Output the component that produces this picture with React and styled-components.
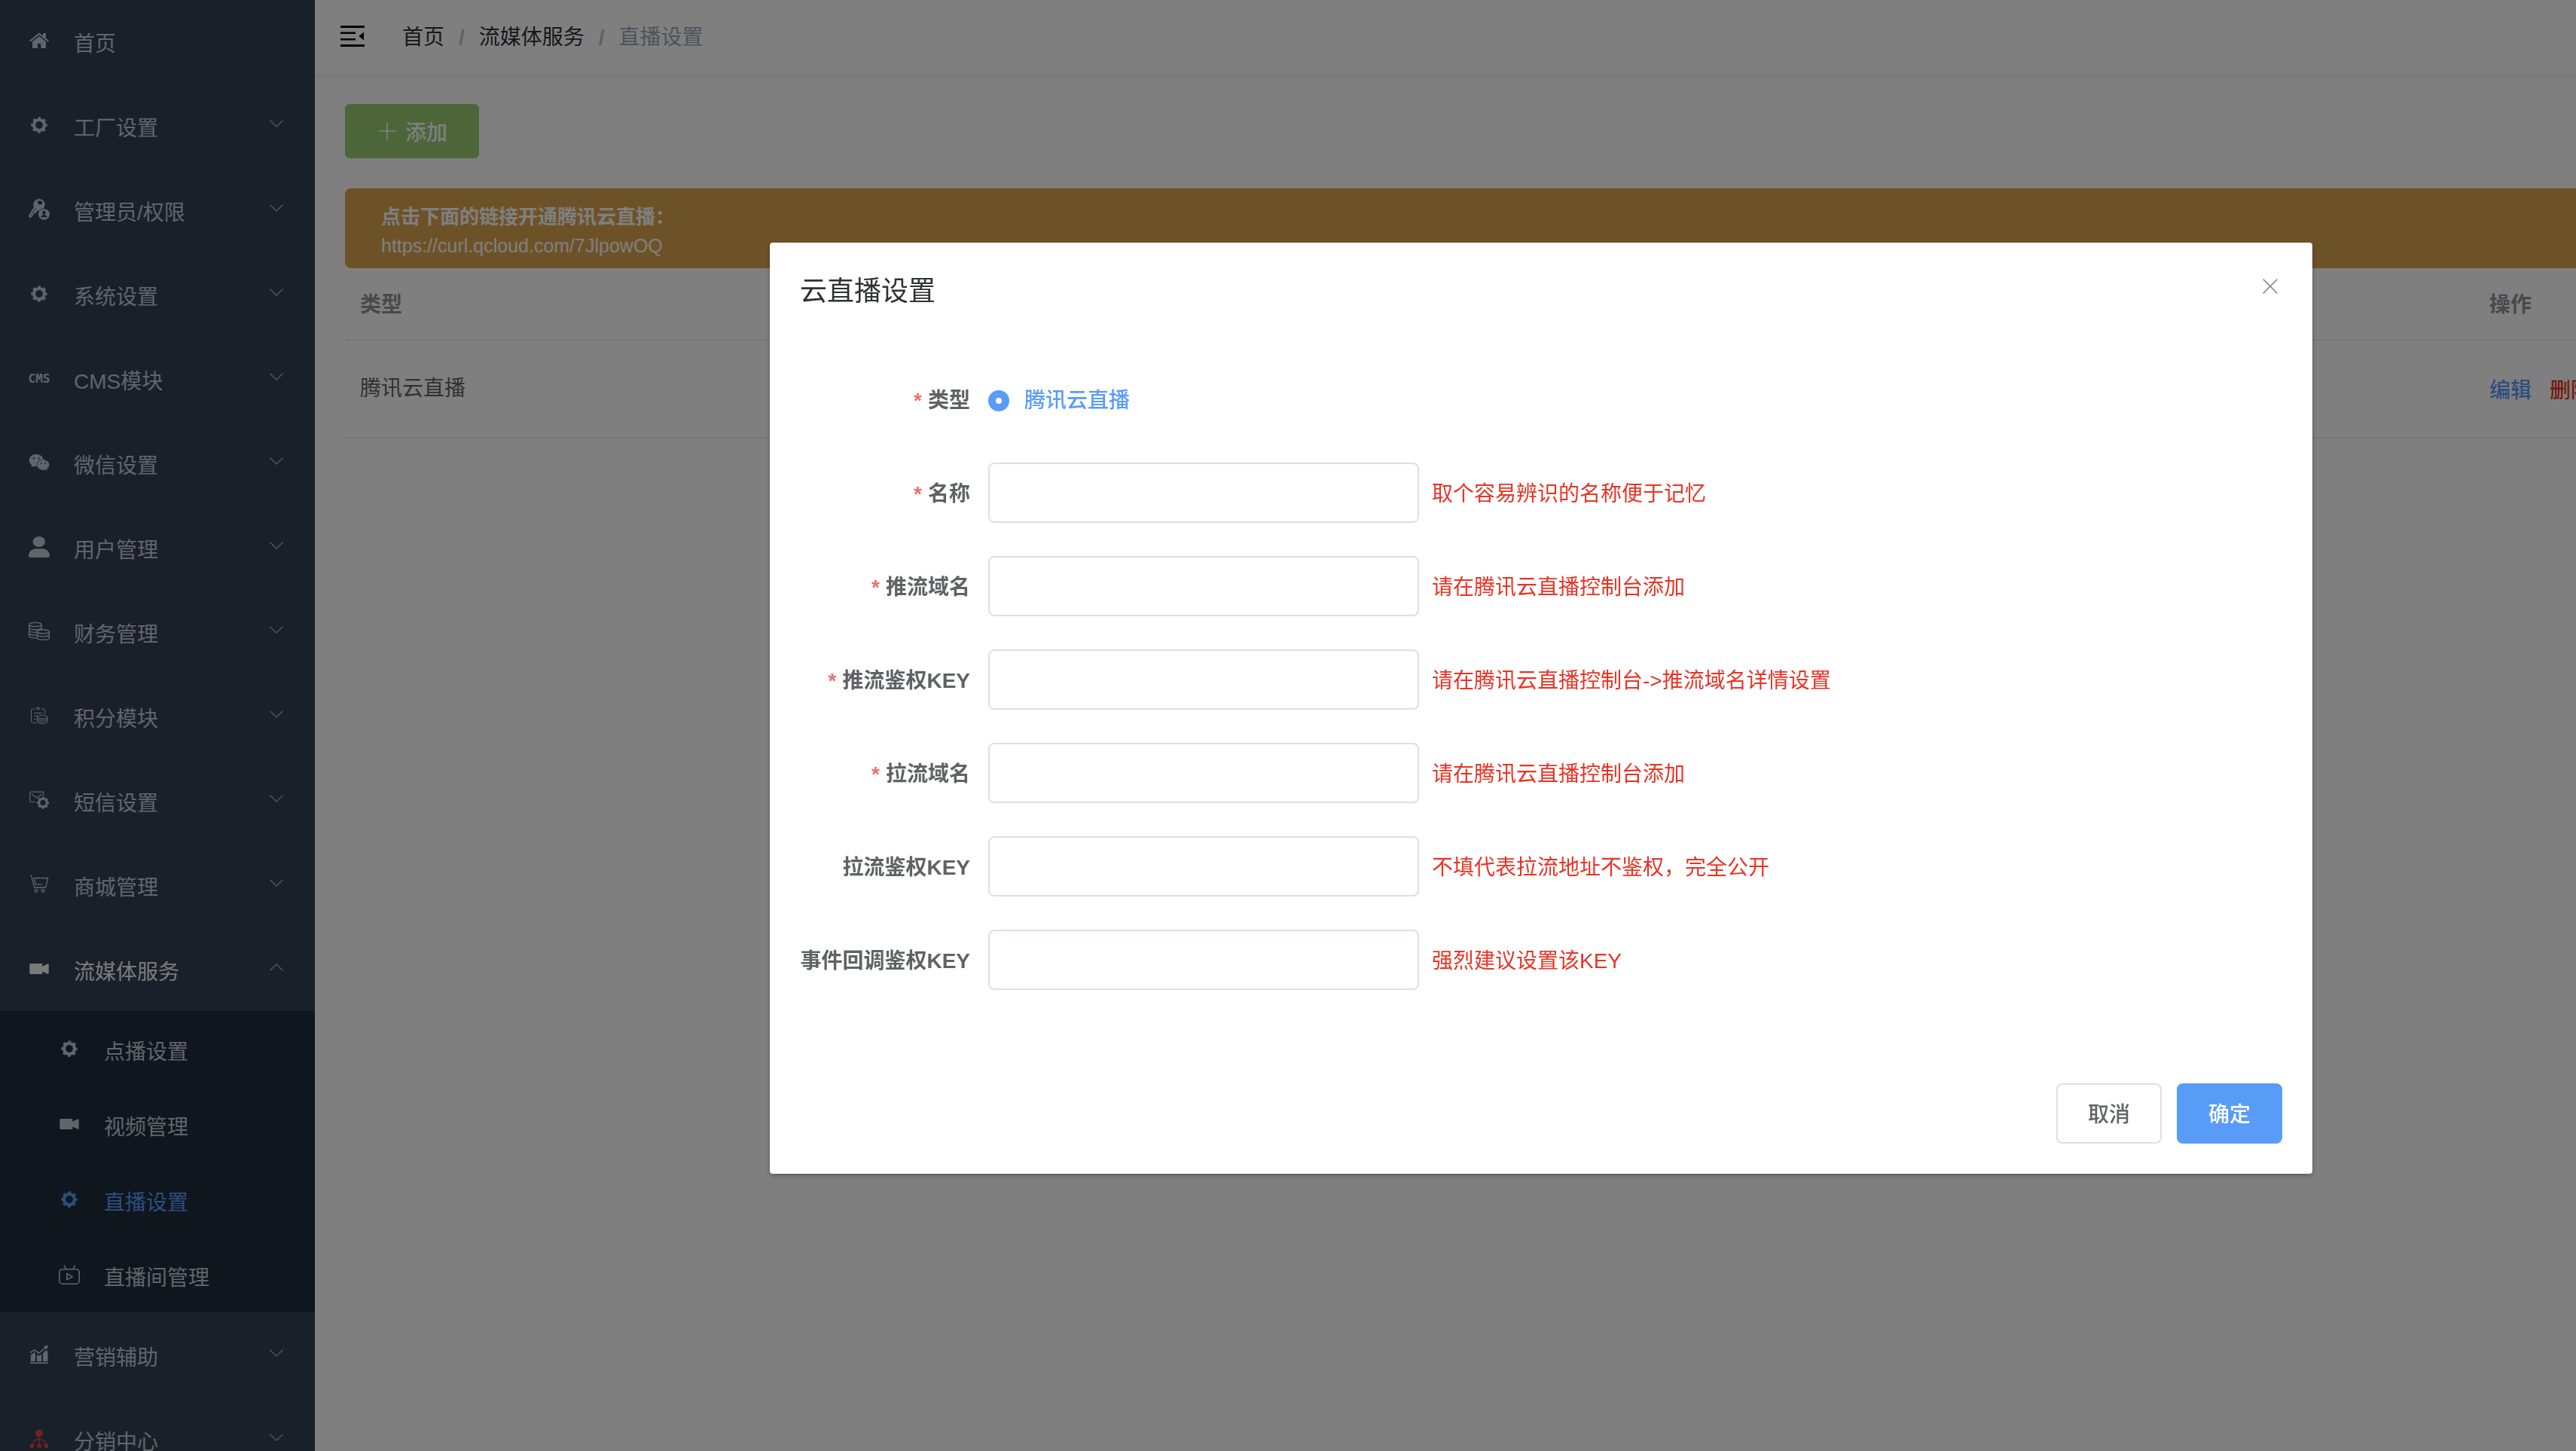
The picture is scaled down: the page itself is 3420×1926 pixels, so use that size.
import React, { useState } from 'react';
import styled, { createGlobalStyle } from 'styled-components';
import { FaWeixin } from 'react-icons/fa';

const GlobalStyle = createGlobalStyle`
  * {
    box-sizing: border-box;
  }
  html,
  body {
    margin: 0;
    overflow: hidden;
    background: #fff;
  }
  body,
  button,
  input {
    font-family: "Liberation Sans", "Noto Sans CJK SC", sans-serif;
    font-size: 28px;
  }
`;

/* ---------- icons ---------- */

const Svg = ({ children, ...rest }) => (
  <svg width="28" height="28" viewBox="0 0 28 28" fill="none" aria-hidden="true" { ...rest }>
    {children}
  </svg>
);

const HomeIcon = () => (
  <Svg fill="currentColor">
    <path d="M1 14 14 3.5l5 4V4h4v6.8l4 3.2-1.3 1.5L14 6.2 2.3 15.5z" />
    <path d="M14 8l9 7.2V23q0 1-1 1h-5.7v-6H12v6H6q-1 0-1-1v-7.8z" />
  </Svg>
);

const Cog = () => (
  <g stroke="currentColor" fill="none">
    <circle cx="14" cy="14" r="7" strokeWidth="4.2" />
    <circle cx="14" cy="14" r="9.7" strokeWidth="2" strokeDasharray="3.8 3.818" strokeDashoffset="1.9" />
  </g>
);

const GearIcon = () => <Svg><Cog /></Svg>;

const AdminIcon = () => (
  <Svg>
    <path
      fill="currentColor"
      fillRule="evenodd"
      d="M14 0a7.6 7.6 0 0 0-7 10.6L.3 22Q-.4 25 2.4 25.2L6 22l1-2.6 2.6-.6 1.8-3q6 1 9.6-5.4A7.6 7.6 0 0 0 14 0zm1.2 2.6q3.6.6 3 3.6-1.600 2.400-4.400 1-2.600-1.400-1.800-3.600 1.200-1.400 3.200-1z"
    />
    <path stroke="#354154" strokeWidth="0.8" d="M9.5 11.5 3 22.5" />
    <circle cx="20.4" cy="20.6" r="8.2" fill="#354154" />
    <circle cx="20.4" cy="20.6" r="7.4" fill="currentColor" />
    <path fill="#354154" d="M20.4 15.6a2.6 2.8 0 0 1 1.2 5l.2 1q3 .6 3 2.6h-8.8q0-2 3-2.6l.2-1a2.600 2.800 0 0 1 1.200-5z" />
  </Svg>
);

const UserIcon = () => (
  <Svg fill="currentColor">
    <ellipse cx="13.7" cy="7" rx="8.2" ry="7" />
    <path d="M0 25.5C0 20 5 16.3 10 16.3h8c5 0 10 3.7 10 9.2Q28 28 25 28H3q-3 0-3-2.5z" />
  </Svg>
);

const CoinsIcon = () => (
  <Svg stroke="currentColor" strokeWidth="1.4">
    <ellipse cx="8.8" cy="5" rx="8.2" ry="2.6" />
    <path d="M.6 5v15.5c1 1.8 5 2.6 9.4 2.2M17 5v6.5M.6 9.5c1.4 3 15 3 16.4 0M.6 13c1 1.800 5 2.600 10 2.200M.6 16.800c1 1.800 5 2.600 9.400 2.200" />
    <ellipse cx="19.3" cy="14.4" rx="8.1" ry="2.6" />
    <path d="M11.2 14.4V23c1.4 3 14.8 3 16.2 0v-8.6M11.2 18.6c1.4 3 14.8 3 16.2 0" />
  </Svg>
);

const PointsIcon = () => (
  <Svg stroke="currentColor" strokeWidth="1">
    <path d="M8 5H5.500Q3.500 5 3.500 7v14.500q0 2 2 2H10M17 5h2.500q2 0 2 2v4.500M9.500 3.500h6M10.500 5.500h4M12.500 3.500v2M7 10.500h11M7 14.500h5M7 18.500h3" />
    <ellipse cx="18.3" cy="15.5" rx="6.6" ry="2.2" />
    <path d="M11.7 15.5v7c1 2.8 12.2 2.8 13.2 0v-7M11.7 17.8c1 2.8 12.2 2.8 13.2 0M11.7 20.2c1 2.8 12.2 2.8 13.2 0" />
  </Svg>
);

const SmsIcon = () => (
  <Svg stroke="currentColor" strokeWidth="1.2">
    <path d="M9 16.5H3.5q-1.8 0-1.8-1.8V5q0-1.8 1.8-1.8h15q1.3 0 1.3 1.8v3M4 6l7.2 5L18 6" />
    <g transform="translate(8.4 6.9) scale(.76)"><Cog /></g>
  </Svg>
);

const CartIcon = () => (
  <Svg stroke="currentColor" strokeWidth="1.3">
    <path d="M2 2.3h1.5L7.8 18h14.8l3-12.5H7.2l2 8.3h8.5" strokeLinejoin="round" />
    <circle cx="10" cy="22.5" r="1.8" />
    <circle cx="19" cy="22.5" r="1.8" />
  </Svg>
);

const VideoIcon = () => (
  <Svg fill="currentColor">
    <path d="M2.5 7H17q1.2 0 1.2 1.2v2.6l7.3-3.5q1.2-.3 1.2.7v12q0 1-1.2.7l-7.3-3v2.1Q18.2 21 17 21H2.5q-1.2 0-1.2-1.2V8.2Q1.3 7 2.5 7z" />
  </Svg>
);

const TvIcon = () => (
  <Svg stroke="currentColor" strokeWidth="1.6" strokeLinejoin="round" strokeLinecap="round">
    <rect x=".8" y="6.7" width="26.4" height="19.5" rx="4" />
    <path d="M7.5 2l2.3 4.5M21.3 2 19 6.5M10.8 12.4l7.6 4.2-7.6 4z" />
  </Svg>
);

const ChartIcon = () => (
  <Svg fill="currentColor">
    <path d="M2.8 14.5 7.7 11l1.2 1v11H2.8zM11 13.8l2.8 2 3.2-2.2V23h-6zM19 12.2l4-4 2.5 2V23H19zM2 24.3h24v1.6H2z" />
    <path d="M2 11.5l5.7-3.6 6 4.3 9-7.6" fill="none" stroke="currentColor" strokeWidth="1.6" />
    <path d="M26 1.5l-1.8 6-4.5-4.3z" />
  </Svg>
);

const OrgIcon = () => (
  <Svg fill="#e0424a">
    <circle cx="14" cy="6.5" r="5" />
    <circle cx="4.5" cy="23.3" r="2.8" />
    <circle cx="14" cy="23.3" r="2.8" />
    <circle cx="23.5" cy="23.3" r="2.8" />
    <path d="M14 11v12M4.5 22c.5-5 5-7.5 9.5-7.5s9 2.5 9.5 7.5" fill="none" stroke="#e0424a" strokeWidth="1.5" />
  </Svg>
);

const Chevron = ({ up }) => (
  <svg width="18" height="10" viewBox="0 0 18 10" fill="none" stroke="currentColor" strokeWidth="1.4" aria-hidden="true">
    <path d={ up ? 'M.5 9.3 9 1l8.5 8.3' : 'M.5.7 9 9 17.5.7' } />
  </svg>
);

const FoldIcon = () => (
  <svg width="32" height="28" viewBox="0 0 32 28" fill="#000" aria-hidden="true">
    <path d="M0 0h32v3H0zM0 8.500h20v2.500H0zM0 17h20v2.500H0zM0 25h32v3H0zM31 8.500v11L24.500 14z" />
  </svg>
);

const PlusIcon = () => (
  <svg width="24" height="24" viewBox="0 0 24 24" stroke="currentColor" strokeWidth="1.6" aria-hidden="true">
    <path d="M12 .5v23M.5 12h23" />
  </svg>
);

const CloseIcon = () => (
  <svg width="20" height="20" viewBox="0 0 20 20" stroke="currentColor" strokeWidth="1.8" aria-hidden="true">
    <path d="M.7.7l18.600 18.600M19.300.7.7 19.300" />
  </svg>
);

/* ---------- data ---------- */

const menu = [
  { label: '首页', icon: <HomeIcon /> },
  { label: '工厂设置', icon: <GearIcon />, group: true },
  { label: '管理员/权限', icon: <AdminIcon />, group: true },
  { label: '系统设置', icon: <GearIcon />, group: true },
  { label: 'CMS模块', cms: true, group: true },
  { label: '微信设置', icon: <FaWeixin size={ 28 } />, group: true },
  { label: '用户管理', icon: <UserIcon />, group: true },
  { label: '财务管理', icon: <CoinsIcon />, group: true },
  { label: '积分模块', icon: <PointsIcon />, group: true },
  { label: '短信设置', icon: <SmsIcon />, group: true },
  { label: '商城管理', icon: <CartIcon />, group: true },
  {
    label: '流媒体服务',
    icon: <VideoIcon />,
    group: true,
    children: [
      { label: '点播设置', icon: <GearIcon /> },
      { label: '视频管理', icon: <VideoIcon /> },
      { label: '直播设置', icon: <GearIcon />, active: true },
      { label: '直播间管理', icon: <TvIcon /> },
    ],
  },
  { label: '营销辅助', icon: <ChartIcon />, group: true },
  { label: '分销中心', icon: <OrgIcon />, group: true },
];

const fields = [
  { id: 'name', label: '名称', required: true, hint: '取个容易辨识的名称便于记忆' },
  { id: 'pushDomain', label: '推流域名', required: true, hint: '请在腾讯云直播控制台添加' },
  { id: 'pushKey', label: '推流鉴权KEY', required: true, hint: '请在腾讯云直播控制台->推流域名详情设置' },
  { id: 'pullDomain', label: '拉流域名', required: true, hint: '请在腾讯云直播控制台添加' },
  { id: 'pullKey', label: '拉流鉴权KEY', hint: '不填代表拉流地址不鉴权，完全公开' },
  { id: 'eventKey', label: '事件回调鉴权KEY', hint: '强烈建议设置该KEY' },
];

/* ---------- components ---------- */

const Sidebar = () => {
  const [opened, setOpened] = useState('流媒体服务');

  return (
    <Aside>
      <MenuList>
        {menu.map((item) => {
          const open = item.children && opened === item.label;
          return (
            <li key={ item.label }>
              <MenuItem
                as={ item.group ? 'button' : 'a' }
                href={ item.group ? undefined : '#home' }
                $open={ open }
                onClick={ () => item.group && setOpened(open ? '' : item.label) }
              >
                <IconBox>{item.cms ? <CmsMark>CMS</CmsMark> : item.icon}</IconBox>
                <MenuText>{item.label}</MenuText>
                {item.group && <Arrow><Chevron up={ open } /></Arrow>}
              </MenuItem>
              {open && (
                <SubMenu>
                  {item.children.map((child) => (
                    <li key={ child.label }>
                      <SubItem href="#live" $active={ child.active }>
                        <IconBox>{child.icon}</IconBox>
                        <MenuText>{child.label}</MenuText>
                      </SubItem>
                    </li>
                  ))}
                </SubMenu>
              )}
            </li>
          );
        })}
      </MenuList>
    </Aside>
  );
};

const LiveDialog = ({ onClose }) => (
  <Mask>
    <Dialog role="dialog" aria-labelledby="dialog-title">
      <DialogHeader>
        <DialogTitle id="dialog-title">云直播设置</DialogTitle>
        <CloseButton type="button" aria-label="Close" onClick={ onClose }>
          <CloseIcon />
        </CloseButton>
      </DialogHeader>
      <DialogBody>
        <FormItem>
          <Label as="span" $required>类型</Label>
          <RadioLabel>
            <Radio type="radio" name="type" defaultChecked />
            腾讯云直播
          </RadioLabel>
        </FormItem>
        {fields.map(({ id, label, required, hint }) => (
          <FormItem key={ id }>
            <Label htmlFor={ id } $required={ required }>{label}</Label>
            <Input id={ id } type="text" />
            <Hint>{hint}</Hint>
          </FormItem>
        ))}
      </DialogBody>
      <DialogFooter>
        <Button type="button" onClick={ onClose }>取消</Button>
        <Button type="button" $primary onClick={ onClose }>确定</Button>
      </DialogFooter>
    </Dialog>
  </Mask>
);

const App = () => {
  const [visible, setVisible] = useState(true);

  return (
    <Page>
      <GlobalStyle />
      <Sidebar />
      <Main>
        <Navbar>
          <FoldButton type="button" aria-label="Toggle menu"><FoldIcon /></FoldButton>
          <Breadcrumb>
            <a href="#home">首页</a>
            <i>/</i>
            <a href="#stream">流媒体服务</a>
            <i>/</i>
            <span>直播设置</span>
          </Breadcrumb>
        </Navbar>
        <Content>
          <AddButton type="button" onClick={ () => setVisible(true) }>
            <PlusIcon />
            添加
          </AddButton>
          <Alert>
            <strong>点击下面的链接开通腾讯云直播：</strong>
            <a href="https://curl.qcloud.com/7JlpowOQ">https://curl.qcloud.com/7JlpowOQ</a>
          </Alert>
          <Table>
            <thead>
              <tr>
                <th>类型</th>
                <th>操作</th>
              </tr>
            </thead>
            <tbody>
              <tr>
                <td>腾讯云直播</td>
                <td>
                  <Actions>
                    <TextButton type="button" onClick={ () => setVisible(true) }>编辑</TextButton>
                    <TextButton type="button" $danger>删除</TextButton>
                  </Actions>
                </td>
              </tr>
            </tbody>
          </Table>
        </Content>
      </Main>
      {visible && <LiveDialog onClose={ () => setVisible(false) } />}
    </Page>
  );
};

/* ---------- layout ---------- */

const Page = styled.div`
  display: flex;
  height: 100vh;
  overflow: hidden;
`;

const Aside = styled.aside`
  flex: 0 0 418px;
  overflow: hidden;
  background: #354154;
`;

const MenuList = styled.ul`
  margin: -2px 0 0;
  padding: 0;
  list-style: none;
`;

const MenuItem = styled.button`
  display: flex;
  align-items: center;
  width: 100%;
  height: 112px;
  padding: 0 42px 0 38px;
  border: 0;
  background: transparent;
  color: ${({ $open }) => ($open ? '#f4f4f5' : '#c1cad8')};
  text-align: left;
  text-decoration: none;
  cursor: pointer;
`;

const SubMenu = styled.ul`
  margin: 0;
  padding: 0;
  list-style: none;
  background: #212d3c;
`;

const SubItem = styled.a`
  display: flex;
  align-items: center;
  height: 100px;
  padding-left: 78px;
  color: ${({ $active }) => ($active ? '#599cf8' : '#c1cad8')};
  text-decoration: none;
`;

const IconBox = styled.span`
  display: flex;
  align-items: center;
  justify-content: center;
  width: 28px;
  height: 28px;
  margin-right: 32px;
`;

const CmsMark = styled.span`
  font-family: "DejaVu Sans Mono", monospace;
  font-size: 16px;
  font-weight: bold;
`;

const MenuText = styled.span`
  flex: 1;
  padding-top: 10px;
  line-height: 40px;
`;

const Arrow = styled.span`
  display: flex;
  padding-bottom: 4px;
  color: #a5a8ad;
`;

const Main = styled.main`
  flex: 1;
  min-width: 0;
`;

const Navbar = styled.header`
  display: flex;
  align-items: center;
  height: 100px;
  padding: 0 34px 2px;
  border-bottom: 2px solid #f5f5f8;
  box-shadow: 0 2px 8px rgba(0, 21, 41, 0.08);
`;

const FoldButton = styled.button`
  display: flex;
  padding: 0;
  border: 0;
  background: transparent;
  cursor: pointer;
`;

const Breadcrumb = styled.nav`
  display: flex;
  margin-left: 50px;
  padding-top: 4px;
  line-height: 40px;
  a {
    color: #303133;
    text-decoration: none;
  }
  i {
    margin: 0 19px;
    color: #c0c4cc;
    font-weight: bold;
    font-style: normal;
  }
  span {
    color: #9aa7bc;
  }
`;

const Content = styled.section`
  padding: 38px 0 0 40px;
`;

const AddButton = styled.button`
  display: flex;
  align-items: center;
  gap: 12px;
  height: 72px;
  margin-bottom: 40px;
  padding: 0 42px 0 44px;
  border: 0;
  border-radius: 6px;
  background: #98cc72;
  color: #fff;
  font-weight: 500;
  cursor: pointer;
`;

const Alert = styled.div`
  display: flex;
  flex-direction: column;
  height: 106px;
  padding: 18px 48px 0;
  border-radius: 8px 0 0 8px;
  background: #dca44f;
  color: #fff;
  strong {
    font-size: 26px;
    line-height: 40px;
  }
  a {
    color: #fff;
    font-size: 25px;
    line-height: 36px;
    text-decoration: none;
  }
`;

const Table = styled.table`
  width: 100%;
  table-layout: fixed;
  border-collapse: separate;
  border-spacing: 0;
  line-height: 46px;
  text-align: left;
  th,
  td {
    padding: 0 20px;
    border-bottom: 2px solid #ebeef5;
  }
  th {
    height: 96px;
    padding-top: 4px;
    color: #909399;
    font-weight: bold;
  }
  td {
    height: 130px;
    color: #606266;
  }
  th:last-child,
  td:last-child {
    width: 135px;
    white-space: nowrap;
  }
`;

const Actions = styled.div`
  display: flex;
  gap: 24px;
`;

const TextButton = styled.button`
  flex: none;
  padding: 0;
  border: 0;
  background: transparent;
  color: ${({ $danger }) => ($danger ? '#ea3323' : '#599cf8')};
  font-weight: 500;
  cursor: pointer;
`;

/* ---------- dialog ---------- */

const Mask = styled.div`
  position: fixed;
  inset: 0;
  display: flex;
  align-items: flex-start;
  padding: 322px 350px 0 1022px;
  background: rgba(0, 0, 0, 0.5);
`;

const Dialog = styled.div`
  flex: 1;
  border-radius: 4px;
  background: #fff;
  box-shadow: 0 2px 6px rgba(0, 0, 0, 0.3);
`;

const DialogHeader = styled.div`
  display: flex;
  justify-content: space-between;
  align-items: flex-start;
  padding: 40px 40px 20px;
`;

const DialogTitle = styled.h2`
  margin: 0;
  padding-top: 2px;
  color: #303133;
  font-size: 36px;
  font-weight: normal;
  line-height: 46px;
`;

const CloseButton = styled.button`
  display: flex;
  padding: 8px 6px;
  border: 0;
  background: transparent;
  color: #909399;
  cursor: pointer;
`;

const DialogBody = styled.form`
  display: flex;
  flex-direction: column;
  gap: 44px;
  padding: 60px 40px 104px;
`;

const FormItem = styled.div`
  display: flex;
  align-items: center;
  height: 80px;
`;

const Label = styled.label`
  flex: 0 0 250px;
  padding: 4px 24px 0 0;
  color: #606266;
  font-weight: bold;
  line-height: 76px;
  text-align: right;
  white-space: nowrap;
  &::before {
    content: ${({ $required }) => ($required ? '"*"' : 'none')};
    margin-right: 8px;
    color: #e9716d;
  }
`;

const RadioLabel = styled.label`
  display: flex;
  align-items: center;
  gap: 20px;
  padding-top: 4px;
  color: #599cf8;
  font-weight: 500;
  line-height: 76px;
`;

const Radio = styled.input`
  width: 28px;
  height: 28px;
  margin: 0;
  border: 2px solid #dcdfe6;
  border-radius: 50%;
  background: #fff;
  appearance: none;
  &:checked {
    border: 10px solid #599cf8;
  }
`;

const Input = styled.input`
  width: 572px;
  height: 80px;
  padding: 0 30px;
  border: 2px solid #dcdfe6;
  border-radius: 8px;
  background: #fff;
  color: #606266;
`;

const Hint = styled.span`
  margin-left: 17px;
  padding-top: 4px;
  color: #ea3323;
  line-height: 76px;
`;

const DialogFooter = styled.div`
  display: flex;
  justify-content: flex-end;
  gap: 20px;
  padding: 20px 40px 40px;
`;

const Button = styled.button`
  width: 140px;
  height: 80px;
  padding: 0 0 2px;
  border: 2px solid ${({ $primary }) => ($primary ? '#599cf8' : '#dcdfe6')};
  border-radius: 8px;
  background: ${({ $primary }) => ($primary ? '#599cf8' : '#fff')};
  color: ${({ $primary }) => ($primary ? '#fff' : '#606266')};
  font-weight: 500;
  cursor: pointer;
`;

export default App;
